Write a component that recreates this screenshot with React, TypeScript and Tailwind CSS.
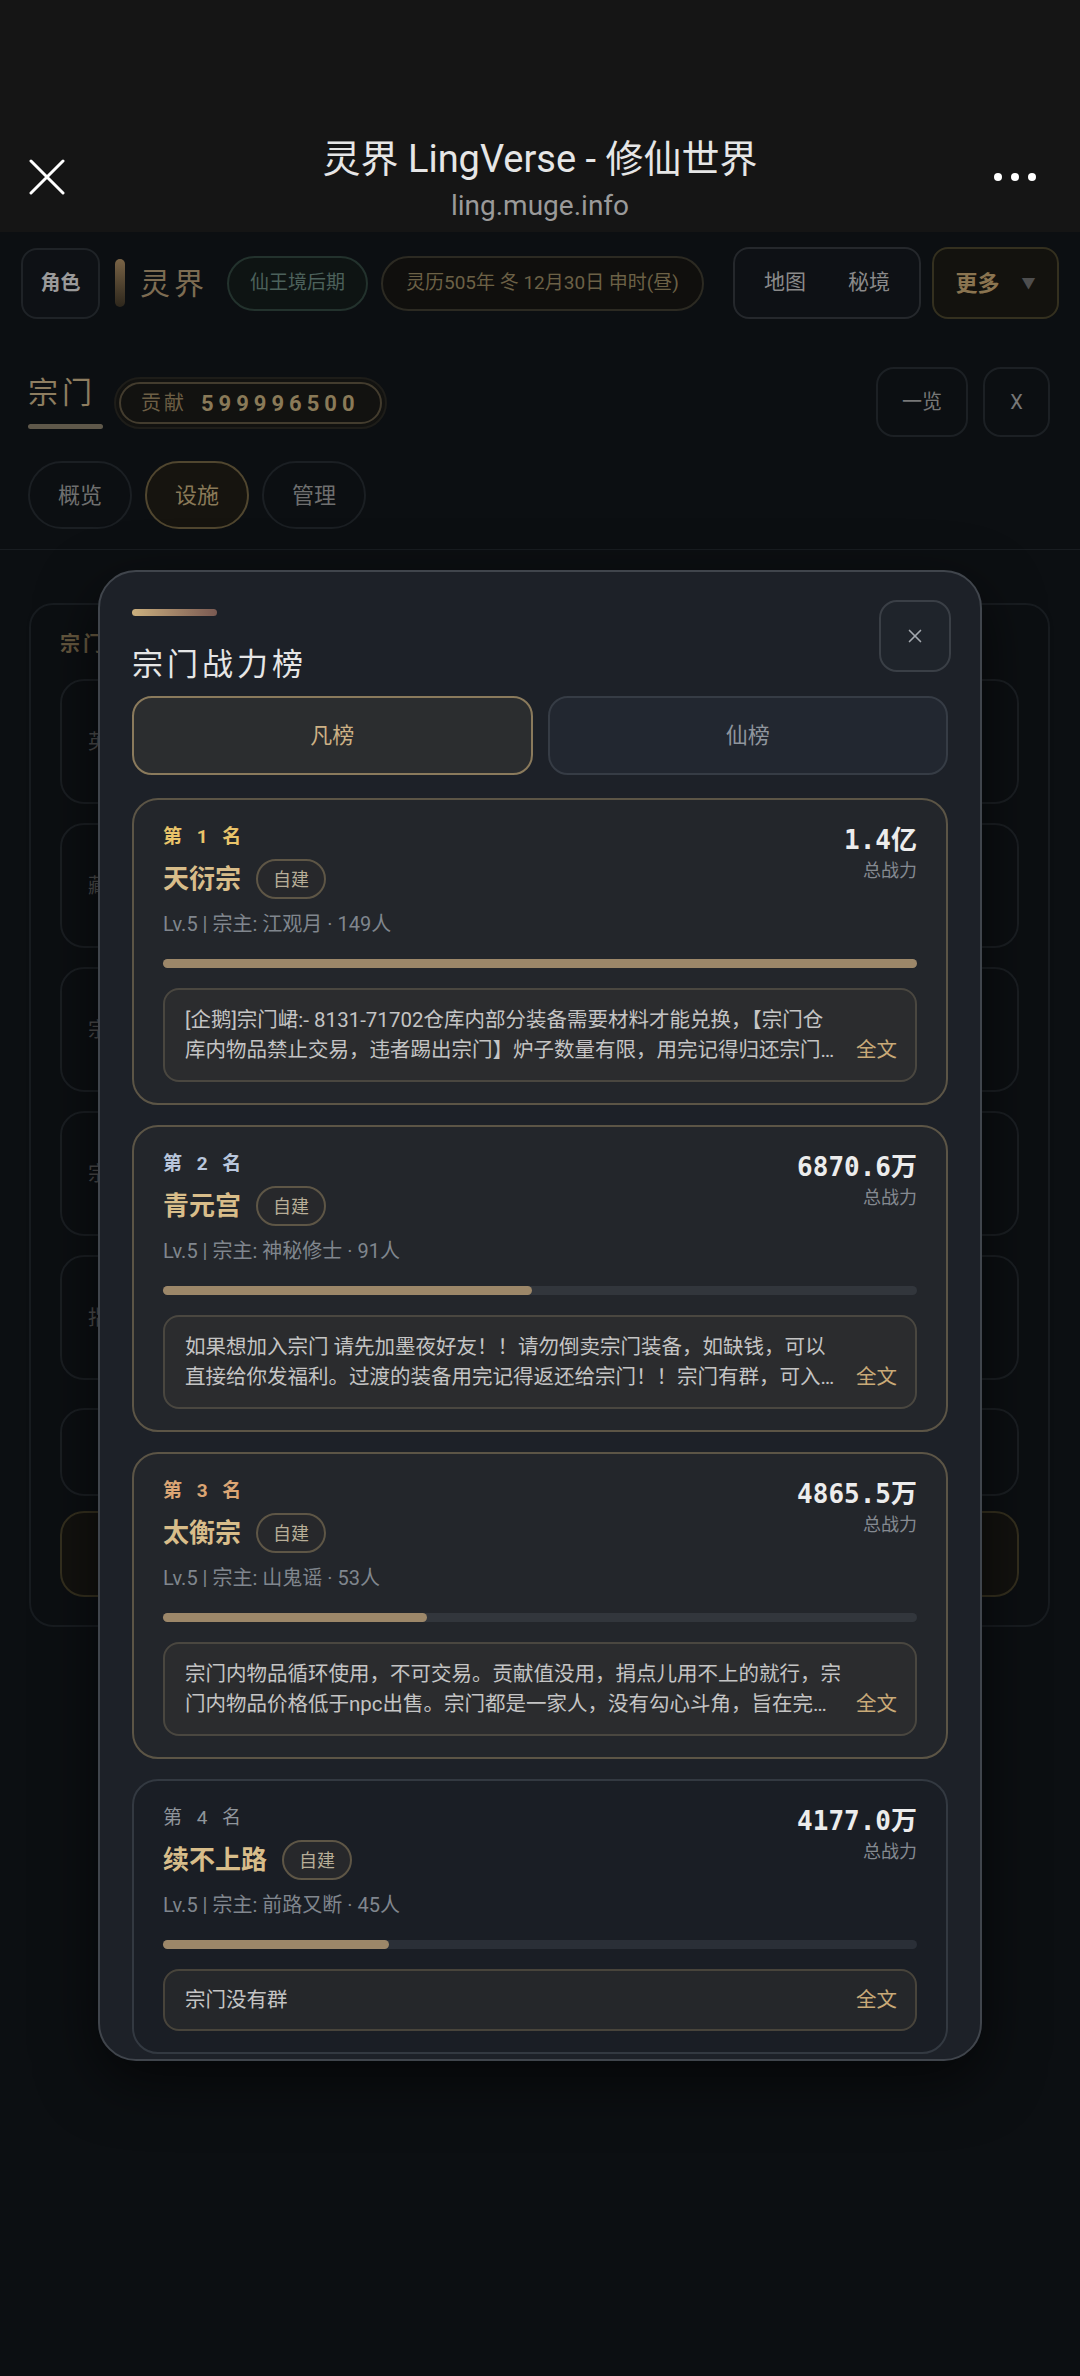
import React from 'react';
import { X } from 'lucide-react';

type Sect = {
  rank: number;
  name: string;
  leader: string;
  members: number;
  power: string;
  percent: number;
  notice: string;
};

const sects: Sect[] = [
  {
    rank: 1,
    name: '天衍宗',
    leader: '江观月',
    members: 149,
    power: '1.4亿',
    percent: 100,
    notice:
      '[企鹅]宗门峮:- 8131-71702仓库内部分装备需要材料才能兑换，【宗门仓库内物品禁止交易，违者踢出宗门】炉子数量有限，用完记得归还宗门，以便其他道友使用。',
  },
  {
    rank: 2,
    name: '青元宫',
    leader: '神秘修士',
    members: 91,
    power: '6870.6万',
    percent: 49,
    notice:
      '如果想加入宗门 请先加墨夜好友！！请勿倒卖宗门装备，如缺钱，可以直接给你发福利。过渡的装备用完记得返还给宗门！！宗门有群，可入群交流。',
  },
  {
    rank: 3,
    name: '太衡宗',
    leader: '山鬼谣',
    members: 53,
    power: '4865.5万',
    percent: 35,
    notice:
      '宗门内物品循环使用，不可交易。贡献值没用，捐点儿用不上的就行，宗门内物品价格低于npc出售。宗门都是一家人，没有勾心斗角，旨在完美修仙。',
  },
  {
    rank: 4,
    name: '续不上路',
    leader: '前路又断',
    members: 45,
    power: '4177.0万',
    percent: 30,
    notice: '宗门没有群',
  },
];

const rankColors: Record<number, string> = {
  1: 'text-[#e9c46a] font-bold',
  2: 'text-[#b9c6dc] font-bold',
  3: 'text-[#dba574] font-bold',
  4: 'text-[#8f959c] font-normal',
};

const facilities = ['英灵殿', '藏经阁', '宗门仓库', '宗门商店', '指点阁'];

const SectCard: React.FC<{ sect: Sect }> = ({ sect }) => {
  const top = sect.rank <= 3;
  return (
    <div
      className={
        top
          ? 'rounded-[26px] border-2 border-[#5c5546] bg-[#23262b] px-[29px] pt-[25px] pb-[21px]'
          : 'rounded-[26px] border-2 border-[#333941] bg-[#1a1e25] px-[29px] pt-[25px] pb-[21px]'
      }
    >
      <div className="flex justify-between">
        <div>
          <div className={`text-[19px] leading-[24px] tracking-[5px] ${rankColors[sect.rank]}`}>
            第 {sect.rank} 名
          </div>
          <div className="mt-[10px] flex items-center gap-[15px]">
            <span className="text-[26px] leading-[32px] font-bold text-[#d8bd8a]">{sect.name}</span>
            <span className="flex h-[40px] items-center rounded-full border-2 border-[#5e5646] bg-[#27282b] px-[15px] text-[18px] text-[#b8ae98]">
              自建
            </span>
          </div>
          <div className="mt-[13px] text-[20px] leading-[24px] text-[#80868e]">
            Lv.5 | 宗主: {sect.leader} · {sect.members}人
          </div>
        </div>
        <div className="text-right">
          <div className="font-['DejaVu_Sans_Mono','Noto_Sans_CJK_SC',monospace] text-[26px] leading-[30px] font-bold text-[#ececec]">
            {sect.power}
          </div>
          <div className="mt-[4px] text-[18px] leading-[24px] text-[#858a91]">总战力</div>
        </div>
      </div>
      <div className={top ? 'mt-[23px] h-[9px] rounded-full bg-[#32363c]' : 'mt-[23px] h-[9px] rounded-full bg-[#2a2f37]'}>
        <div className="h-full rounded-full bg-[#9c8769]" style={{ width: `${sect.percent}%` }} />
      </div>
      <div
        className={
          top
            ? 'mt-[20px] flex items-end rounded-[16px] border-2 border-[#4a4740] bg-[#2b2c2e] py-[15px] pr-[18px] pl-[20px]'
            : 'mt-[20px] flex items-end rounded-[16px] border-2 border-[#48443b] bg-[#25272a] py-[14px] pr-[18px] pl-[20px]'
        }
      >
        <p className="line-clamp-2 w-[658px] shrink-0 text-[20.5px] leading-[30px] text-[#c4c4c4]">{sect.notice}</p>
        <span className="ml-auto shrink-0 text-[20.5px] leading-[30px] text-[#c9aa78]">全文</span>
      </div>
    </div>
  );
};

export default function App() {
  return (
    <div className="relative h-[2376px] w-[1080px] overflow-hidden bg-[#0c0f12] font-['Roboto','Noto_Sans_CJK_SC',sans-serif]">
      {/* webview chrome */}
      <div className="grid h-[232px] grid-cols-[120px_1fr_120px] items-center bg-[#151515] pt-[128px]">
        <div className="mb-[6px] pl-[29px]">
          <svg width="36" height="36" viewBox="0 0 36 36">
            <path d="M2 2 L34 34 M34 2 L2 34" stroke="#ffffff" strokeWidth="3" strokeLinecap="round" />
          </svg>
        </div>
        <div className="flex flex-col items-center">
          <div className="text-[38px] leading-[44px] text-[#e6e6e6]">灵界 LingVerse - 修仙世界</div>
          <div className="mt-[8px] text-[28px] leading-[34px] text-[#9a9a9a]">ling.muge.info</div>
        </div>
        <div className="mb-[6px] flex justify-end gap-[9px] pr-[44px]">
          <span className="h-[8px] w-[8px] rounded-full bg-white" />
          <span className="h-[8px] w-[8px] rounded-full bg-white" />
          <span className="h-[8px] w-[8px] rounded-full bg-white" />
        </div>
      </div>

      {/* top bar */}
      <div className="flex items-center justify-between pt-[15px] pr-[21px] pl-[21px]">
        <div className="flex items-center">
          <div className="flex h-[71px] w-[79px] items-center justify-center rounded-[16px] border-2 border-[#1f2327] bg-[#0e1115] text-[20px] font-bold text-[#9a9a9a]">
            角色
          </div>
          <div className="ml-[15px] h-[48px] w-[10px] rounded-full bg-gradient-to-b from-[#7a6446] to-[#2e271c]" />
          <div className="ml-[15px] text-[30px] tracking-[4px] text-[#7d6c52]">灵界</div>
          <div className="ml-[19px] flex h-[55px] w-[141px] items-center justify-center rounded-full border-2 border-[#23322d] bg-[#0e1413] text-[19px] text-[#4c615b]">
            仙王境后期
          </div>
          <div className="ml-[13px] flex h-[55px] w-[323px] items-center justify-center rounded-full border-2 border-[#2c2a22] bg-[#100f0d] text-[19px] text-[#6c6146]">
            灵历505年 冬 12月30日 申时(昼)
          </div>
        </div>
        <div className="flex items-center gap-[11px]">
          <div className="flex h-[72px] w-[188px] items-center justify-center gap-[42px] rounded-[16px] border-2 border-[#25282c] bg-[#0e1115] text-[21px] text-[#8a8a8a]">
            <span>地图</span>
            <span>秘境</span>
          </div>
          <div className="flex h-[72px] w-[127px] items-center justify-center gap-[22px] rounded-[16px] border-2 border-[#34301f] bg-[#13120e] text-[22px]">
            <span className="font-bold text-[#8a7450]">更多</span>
            <span className="text-[14px] text-[#4e4e4e]">▼</span>
          </div>
        </div>
      </div>

      {/* sect header */}
      <div className="mt-[48px] flex items-start justify-between pr-[30px] pl-[28px]">
        <div className="flex items-start gap-[11px] pt-[10px]">
          <div className="flex flex-col">
            <span className="text-[30px] leading-[32px] tracking-[4px] text-[#8d7d60]">宗门</span>
            <span className="mt-[15px] h-[5px] w-[75px] rounded-full bg-[#5f584a]" />
          </div>
          <div className="rounded-full border-2 border-[#1e1d19] bg-[#121210] p-[3px]">
            <div className="flex h-[42px] items-center gap-[14px] rounded-full border-2 border-[#433c2e] px-[20px]">
              <span className="text-[20px] tracking-[3px] text-[#6d5f45]">贡献</span>
              <span className="text-[22px] font-bold tracking-[5px] text-[#8a7a58]">599996500</span>
            </div>
          </div>
        </div>
        <div className="flex gap-[15px]">
          <div className="flex h-[70px] w-[92px] items-center justify-center rounded-[18px] border-2 border-[#1c2024] text-[20px] text-[#777]">
            一览
          </div>
          <div className="flex h-[70px] w-[67px] items-center justify-center rounded-[18px] border-2 border-[#1c2024] text-[20px] text-[#777]">
            X
          </div>
        </div>
      </div>

      {/* tabs */}
      <div className="mt-[24px] flex gap-[13px] pl-[28px]">
        <div className="flex h-[68px] w-[104px] items-center justify-center rounded-full border-2 border-[#1b1f23] text-[22px] text-[#6f6f6f]">
          概览
        </div>
        <div className="flex h-[68px] w-[104px] items-center justify-center rounded-full border-2 border-[#50462f] bg-[#16140f] text-[22px] text-[#8a7a58]">
          设施
        </div>
        <div className="flex h-[68px] w-[104px] items-center justify-center rounded-full border-2 border-[#1b1f23] text-[22px] text-[#6f6f6f]">
          管理
        </div>
      </div>
      <div className="mt-[20px] h-[1px] bg-[#191d21]" />

      {/* facilities panel behind the modal */}
      <div className="mt-[53px] ml-[29px] w-[1021px] rounded-[24px] border-2 border-[#181c20] px-[29px] pt-[27px] pb-[28px]">
        <div className="text-[20px] leading-[24px] font-bold tracking-[3px] text-[#66583f]">宗门设施</div>
        <div className="mt-[23px] flex flex-col gap-[19px]">
          {facilities.map((f) => (
            <div
              key={f}
              className="flex h-[125px] items-center rounded-[24px] border-2 border-[#1b1f23] pl-[26px] text-[20px] text-[#4d4d4d]"
            >
              {f}
            </div>
          ))}
        </div>
        <div className="mt-[28px] h-[88px] rounded-[24px] border-2 border-[#1b1f23]" />
        <div className="mt-[15px] h-[86px] rounded-[24px] border-2 border-[#35301f] bg-[#13120f]" />
      </div>

      {/* ranking modal */}
      <div className="absolute top-[570px] left-[98px] flex h-[1491px] w-[884px] flex-col overflow-hidden rounded-[38px] border-2 border-[#40454c] bg-[#1d2128] px-[32px] pt-[28px] shadow-[0_20px_60px_rgba(0,0,0,0.6)]">
        <div className="flex items-start justify-between">
          <div className="pt-[9px]">
            <div className="h-[7px] w-[85px] rounded-full bg-gradient-to-r from-[#cbb07e] to-[#7a5a52]" />
            <div className="mt-[29px] text-[31px] leading-[40px] tracking-[4px] text-[#e6e6e6]">宗门战力榜</div>
          </div>
          <div className="mr-[-3px] flex h-[72px] w-[72px] items-center justify-center rounded-[18px] border-2 border-[#3a3f46] bg-[#1f242b]">
            <X size={22} strokeWidth={1.8} color="#a3a8ae" />
          </div>
        </div>
        <div className="mt-[11px] grid grid-cols-2 gap-[15px]">
          <div className="flex h-[79px] items-center justify-center rounded-[20px] border-2 border-[#8a7a5c] bg-[#2b2d2f] text-[22px] text-[#cdb185]">
            凡榜
          </div>
          <div className="flex h-[79px] items-center justify-center rounded-[20px] border-2 border-[#363c45] bg-[#222730] text-[22px] text-[#8f959d]">
            仙榜
          </div>
        </div>
        <div className="mt-[23px] flex flex-col gap-[20px]">
          {sects.map((s) => (
            <SectCard key={s.rank} sect={s} />
          ))}
        </div>
      </div>
    </div>
  );
}
